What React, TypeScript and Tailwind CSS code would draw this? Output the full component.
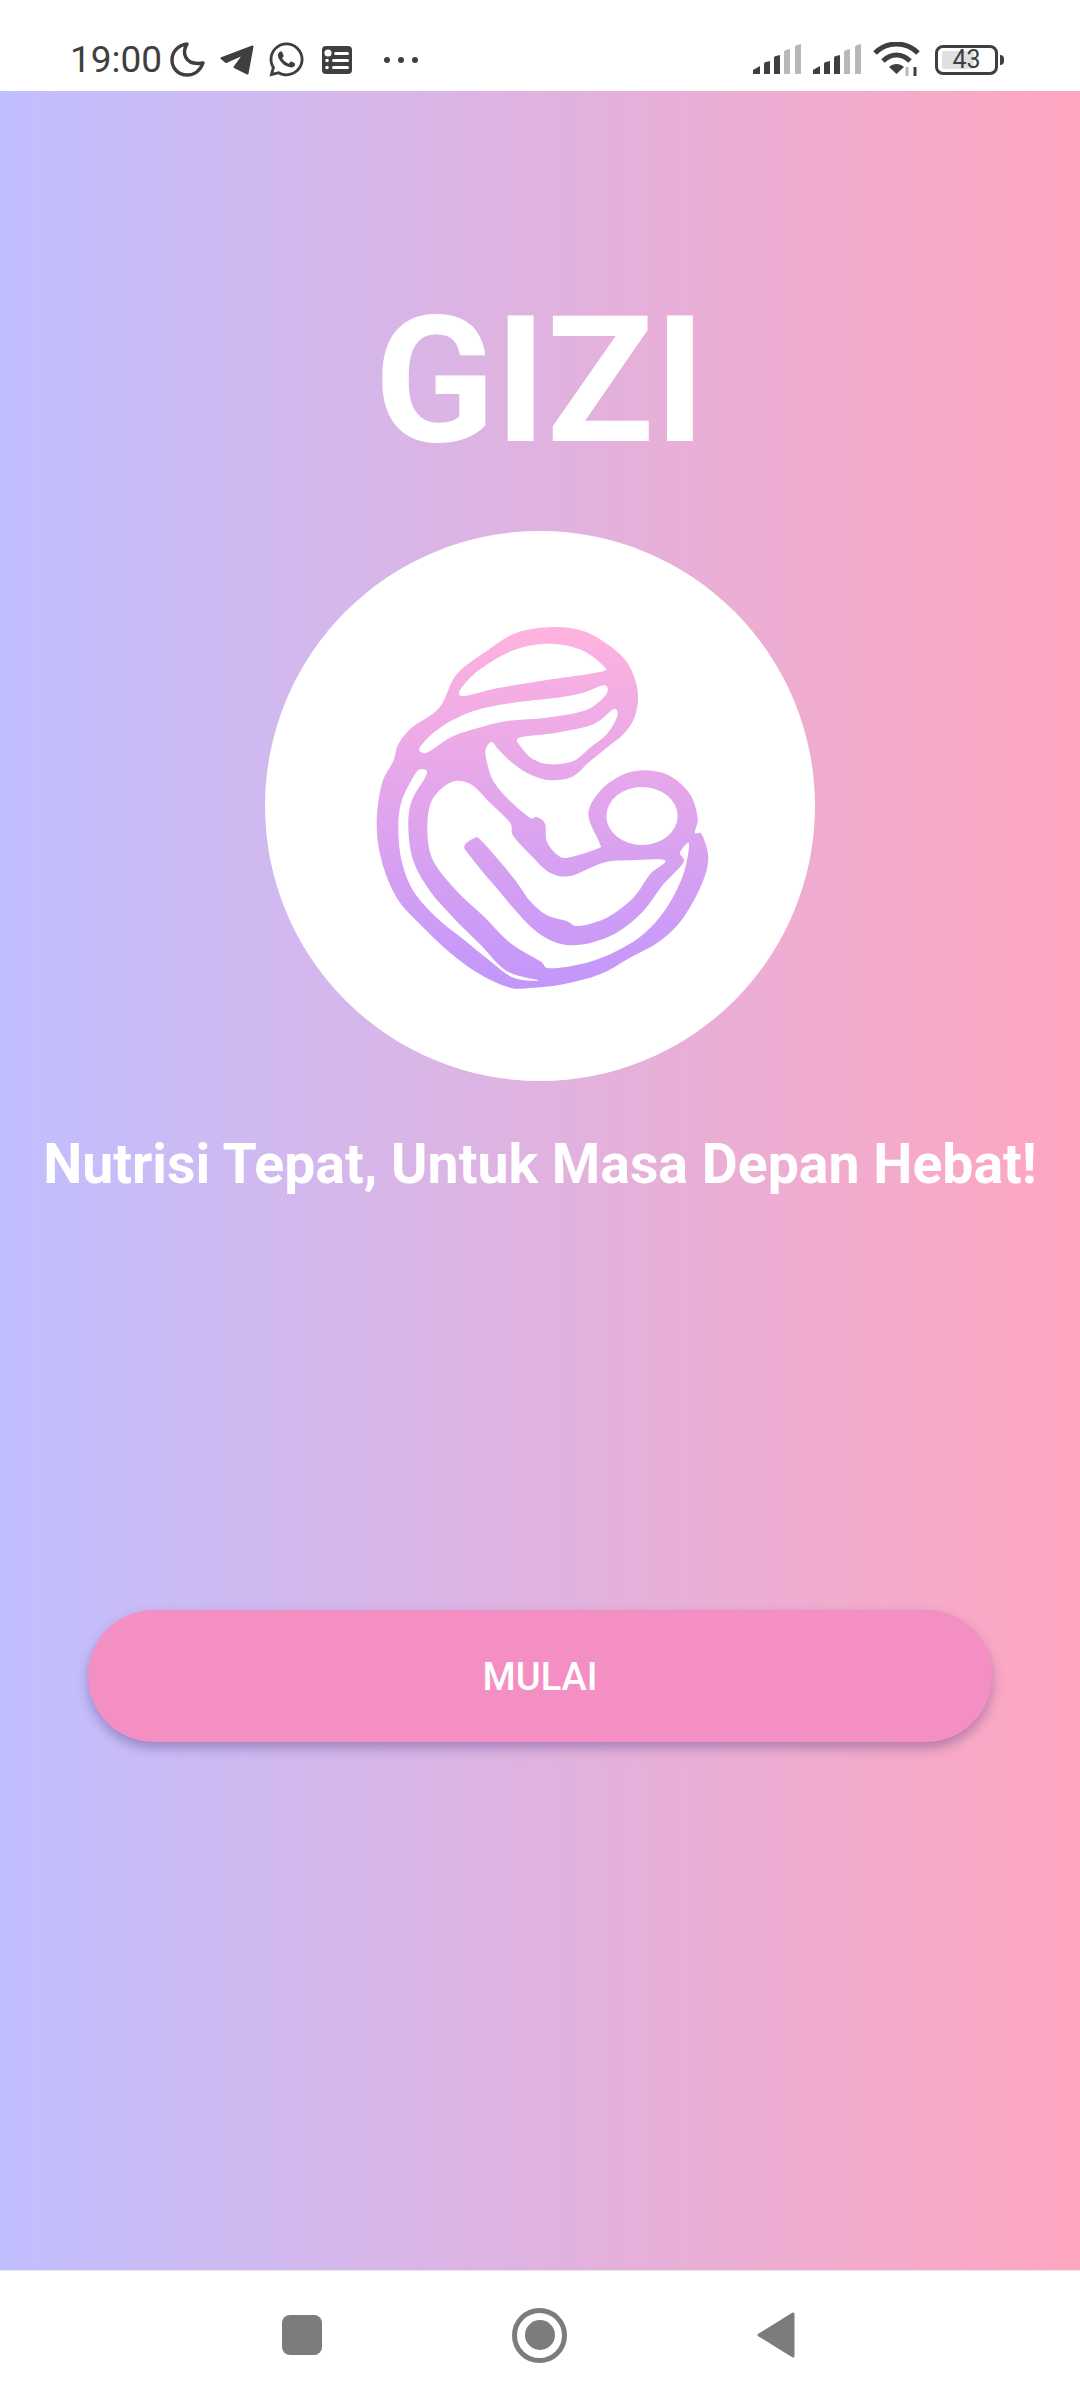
import { JSX } from "react";
import { FaWhatsapp } from "react-icons/fa";

type Pt = [number, number];

// closed smooth outline through the traced points
const smooth = (pts: Pt[]): string => {
    const n = pts.length;
    let d = `M${pts[0][0]} ${pts[0][1]}`;
    for (let i = 0; i < n; i++) {
        const p0 = pts[(i - 1 + n) % n];
        const p1 = pts[i];
        const p2 = pts[(i + 1) % n];
        const p3 = pts[(i + 2) % n];
        const c1x = p1[0] + (p2[0] - p0[0]) / 6;
        const c1y = p1[1] + (p2[1] - p0[1]) / 6;
        const c2x = p2[0] - (p3[0] - p1[0]) / 6;
        const c2y = p2[1] - (p3[1] - p1[1]) / 6;
        d += `C${c1x} ${c1y} ${c2x} ${c2y} ${p2[0]} ${p2[1]}`;
    }
    return d + "Z";
};

const silhouette: Pt[] = [
    [640, 78], [730, 90], [810, 135], [865, 190], [893, 270], [885, 345], [850, 400], [800, 440], [745, 485], [695, 528], [625, 537], [560, 515], [510, 480], [475, 445], [455, 422], [437, 445], [440, 480], [460, 540], [510, 600], [570, 650], [590, 648], [615, 668], [620, 720], [650, 760], [685, 770], [775, 742], [778, 725], [745, 640], [780, 570], [840, 525], [910, 508], [990, 525], [1050, 580], [1073, 650], [1065, 695], [1085, 700], [1105, 770], [1085, 850], [1030, 950], [960, 1020], [870, 1070], [780, 1120], [670, 1150], [580, 1160], [510, 1160], [420, 1120], [330, 1055], [240, 970], [170, 890], [125, 780], [110, 670], [125, 550], [160, 480], [175, 430], [215, 380], [298, 320], [350, 220], [440, 150], [530, 95],
];

const holes: Pt[][] = [
    [[372, 285], [362, 265], [420, 205], [520, 148], [620, 128], [720, 145], [790, 195], [778, 213], [600, 240], [470, 262]],
    [[250, 456], [240, 438], [300, 380], [400, 330], [520, 305], [650, 290], [730, 275], [790, 253], [803, 270], [780, 300], [730, 330], [620, 350], [500, 360], [400, 385], [330, 410], [270, 450]],
    [[538, 410], [650, 395], [760, 370], [820, 325], [832, 345], [800, 400], [750, 440], [700, 480], [630, 490], [580, 475], [545, 440]],
    [[245, 505], [260, 520], [215, 600], [205, 680], [220, 780], [270, 870], [340, 950], [420, 1030], [500, 1110], [595, 1138], [520, 1130], [450, 1080], [370, 1015], [290, 950], [220, 870], [185, 780], [175, 680], [185, 600], [225, 520]],
    [[330, 545], [390, 548], [450, 605], [510, 665], [520, 705], [580, 770], [630, 815], [690, 825], [790, 785], [870, 778], [975, 778], [930, 820], [880, 890], [800, 950], [715, 975], [680, 960], [620, 942], [570, 900], [520, 830], [425, 720], [400, 713], [373, 735], [390, 765], [460, 850], [570, 975], [650, 1025], [730, 1030], [830, 995], [910, 930], [970, 850], [1030, 785], [1020, 755], [1047, 728], [1030, 820], [980, 920], [910, 1000], [830, 1050], [740, 1085], [630, 1102], [600, 1080], [510, 1025], [430, 945], [350, 870], [280, 780], [262, 690], [275, 600]],
];

const MotherLogo = (): JSX.Element => {
    return (
        <svg viewBox="0 0 1200 1200" className="w-[400px] h-[400px] mb-[11px]">
            <defs>
                <linearGradient id="logoFill" gradientUnits="userSpaceOnUse" x1="0" y1="78" x2="0" y2="1160">
                    <stop offset="0" stopColor="#ffb3de" />
                    <stop offset="1" stopColor="#c297fb" />
                </linearGradient>
            </defs>
            <path d={smooth(silhouette)} fill="url(#logoFill)" />
            {holes.map((h, i) => <path key={i} d={smooth(h)} fill="#fff" />)}
            <ellipse cx="906" cy="645" rx="107" ry="87" fill="#fff" />
        </svg>
    )
}

const SignalBars = (): JSX.Element => {
    return (
        <svg viewBox="0 0 48 31" className="w-12 h-[31px]">
            <path d="M0 30 V26 L7 22 V30 Z" fill="#3f3f3f" />
            <path d="M11 30 V20 Q11 18 13 18 L17 17 V30 Z" fill="#3f3f3f" />
            <path d="M21 30 V14 Q21 12 23 12 L27 11 V30 Z" fill="#3f3f3f" />
            <path d="M31 30 V8 Q31 7 33 6 L37 5 V30 Z" fill="#b8b8b8" />
            <path d="M42 30 V3 Q42 2 44 1 L48 0 V30 Z" fill="#b8b8b8" />
        </svg>
    )
}

const StatusBar = (): JSX.Element => {
    return (
        <div className="h-[91px] shrink-0 bg-white flex items-center pl-[70px] pr-[76px] pt-[28px] text-[#3f3f3f]">
            <span className="text-[37px] leading-none">19:00</span>
            <svg viewBox="0 0 35 35" className="w-[35px] h-[35px] ml-[8px]" fill="none" stroke="#3f3f3f" strokeWidth="3.4" strokeLinejoin="round">
                <path d="M17 2 C12 10 14 24 33 21 C30 29 24 33 17 33 C8 33 2 26 2 18 C2 10 8 3 17 2 Z" />
            </svg>
            <svg viewBox="0 0 34 30" className="w-[34px] h-[30px] ml-[15px]">
                <path d="M32.5 1.5 L1.5 13.3 L6 17 L24 9 L14.5 22 L27.5 28.5 Z" fill="#3f3f3f" stroke="#3f3f3f" strokeWidth="2" strokeLinejoin="round" />
            </svg>
            <FaWhatsapp className="w-[39px] h-[39px] ml-[13px]" />
            <svg viewBox="0 0 30 28" className="w-[30px] h-[28px] ml-[16px]">
                <rect width="30" height="28" rx="4" fill="#3f3f3f" />
                <rect x="12" y="6" width="15" height="3" rx="1.5" fill="#fff" />
                <rect x="10" y="13" width="17" height="3" rx="1.5" fill="#fff" />
                <rect x="10" y="20" width="17" height="3" rx="1.5" fill="#fff" />
                <circle cx="6" cy="7" r="3.6" fill="#fff" />
                <circle cx="5" cy="14.5" r="1.8" fill="#fff" />
                <circle cx="5" cy="21.5" r="1.8" fill="#fff" />
            </svg>
            <div className="flex gap-[8px] ml-[32px]">
                <span className="w-[6px] h-[6px] rounded-full bg-[#3f3f3f]" />
                <span className="w-[6px] h-[6px] rounded-full bg-[#3f3f3f]" />
                <span className="w-[6px] h-[6px] rounded-full bg-[#3f3f3f]" />
            </div>
            <div className="ml-auto flex items-center gap-[12px]">
                <SignalBars />
                <SignalBars />
                <svg viewBox="0 0 47 35" className="w-[47px] h-[35px]" fill="none" stroke="#3f3f3f" strokeWidth="5">
                    <path d="M2 11 C14 -1 33 -1 45 11" />
                    <path d="M10 19 C18 11 29 11 37 19" />
                    <path d="M23.5 32 L16 25 C20 21 27 21 31 25 Z" fill="#3f3f3f" stroke="none" />
                    <path d="M34 34 V25" stroke="#b8b8b8" strokeWidth="3" />
                    <path d="M42 34 V25" stroke="#3f3f3f" strokeWidth="3" />
                </svg>
                <div className="flex items-center gap-[2px] ml-[3px]">
                    <div className="relative w-[63px] h-[30px] rounded-[8px] border-[3px] border-[#3f3f3f] flex items-center justify-center">
                        <div className="absolute left-[4px] top-[3px] bottom-[3px] w-[32px] bg-[#e0e0e0] rounded-[2px]" />
                        <span className="relative text-[25px] leading-none">43</span>
                    </div>
                    <div className="w-[4px] h-[10px] rounded-r-full bg-[#3f3f3f]" />
                </div>
            </div>
        </div>
    )
}

const NavBar = (): JSX.Element => {
    return (
        <div className="h-[130px] shrink-0 bg-white border-t border-[#ece6ee] flex items-center pl-[282px] pb-[1px]">
            <div className="w-[40px] h-[40px] rounded-[8px] bg-[#7c7c7c]" />
            <div className="w-[55px] h-[55px] ml-[190px] rounded-full border-[5px] border-[#7c7c7c] flex items-center justify-center">
                <div className="w-[30px] h-[30px] rounded-full bg-[#7c7c7c]" />
            </div>
            <svg viewBox="0 0 38 46" className="w-[38px] h-[46px] ml-[190px]">
                <path d="M36 2 V44 L2 23 Z" fill="#7c7c7c" stroke="#7c7c7c" strokeWidth="3" strokeLinejoin="round" />
            </svg>
        </div>
    )
}

const App = (): JSX.Element => {
    return (
        <div className="w-[1080px] h-screen flex flex-col font-['Roboto',sans-serif]">
            <StatusBar />
            <main className="grow flex flex-col items-center bg-[linear-gradient(90deg,#c1bfff,#ffa6c0)] text-white">
                <h1 className="mt-[178px] text-[177px] leading-[224px] font-bold">GIZI</h1>
                <div className="mt-[38px] w-[550px] h-[550px] rounded-full bg-white flex items-center justify-center">
                    <MotherLogo />
                </div>
                <p className="mt-[50px] text-[55.4px] leading-[68px] font-bold whitespace-nowrap">Nutrisi Tepat, Untuk Masa Depan Hebat!</p>
                <button className="mt-[411px] pt-[3px] w-[904px] h-[132px] rounded-full bg-[#f48fc4] text-[38px] font-medium text-white shadow-[0_6px_12px_rgba(60,40,110,0.35)]">MULAI</button>
            </main>
            <NavBar />
        </div>
    )
}

export default App;
